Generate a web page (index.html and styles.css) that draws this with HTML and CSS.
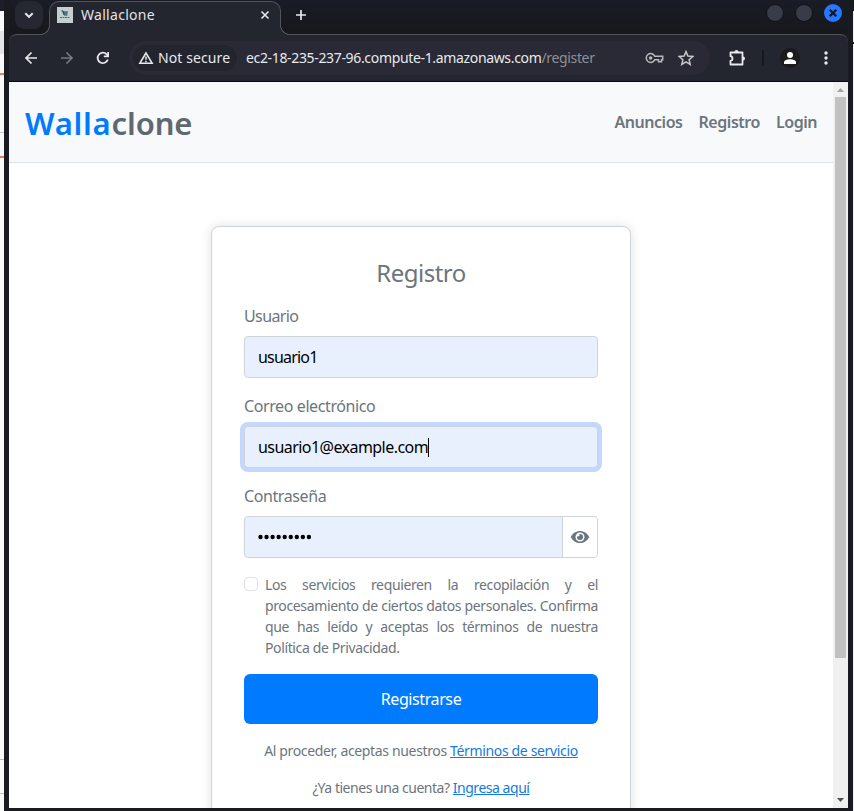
FILE: index.html
```html
<!DOCTYPE html>
<html lang="es">
<head>
<meta charset="utf-8">
<title>Wallaclone</title>
<link rel="stylesheet" href="styles.css">
</head>
<body>
<div class="desktop">
  <div class="behind behind-left"></div>
  <div class="window">
    <div class="tabstrip">
      <div class="tab-search"><svg width="12" height="12" viewBox="0 0 12 12"><path d="M2.300 4.200 6 7.900l3.700-3.700" fill="none" stroke="#e8e9ec" stroke-width="2"/></svg></div>
      <div class="tab">
        <svg class="favicon" width="16" height="16" viewBox="0 0 16 16"><path fill="#c5ced0" d="M0 0h16v16H0z"/><path d="M5 4.200h6L10.300 7.500H6.500z" fill="#49737d"/><path d="M4.500 3.800H6L7 8h3.500" fill="none" stroke="#253f4b" stroke-width=".9"/><path d="M3 10.500h10" stroke="#526a73" stroke-dasharray="2 .5"/></svg>
        <span class="tab-title">Wallaclone</span>
        <svg class="tab-close" width="10" height="10" viewBox="0 0 10 10"><path d="m1.500 1.500 7 7m0-7-7 7" stroke="#e8e9ec" stroke-width="1.600"/></svg>
      </div>
      <svg class="new-tab" width="12" height="12" viewBox="0 0 12 12"><path d="M6 1v10M1 6h10" stroke="#e8e9ec" stroke-width="1.700"/></svg>
      <div class="controls">
        <i class="dot"></i><i class="dot"></i>
        <svg width="18" height="18" viewBox="0 0 18 18"><circle cx="9" cy="9" r="9" fill="#2777ff"/><path d="m5.700 5.700 6.600 6.600m0-6.600-6.600 6.600" stroke="#10182a" stroke-width="2.300"/></svg>
      </div>
    </div>
    <div class="toolbar">
      <svg class="back" width="14" height="14" viewBox="0 0 14 14"><path d="M13 7H2m5.500-5.500L2 7l5.500 5.500" fill="none" stroke="#e8e9ec" stroke-width="1.700"/></svg>
      <svg class="forward" width="14" height="14" viewBox="0 0 14 14"><path d="M1 7h11M6.500 1.500 12 7l-5.500 5.500" fill="none" stroke="#777982" stroke-width="1.700"/></svg>
      <svg class="reload" width="14" height="14" viewBox="0 0 14 14"><path d="M11.800 8.500A5.200 5.200 0 1 1 10.700 3.400L12.300 5" fill="none" stroke="#e8e9ec" stroke-width="1.800"/><path d="M13 1v5.200H7.800V4.500h3.500V1z" fill="#e8e9ec"/></svg>
      <div class="omnibox">
        <div class="chip">
          <svg width="16" height="14" viewBox="0 0 16 14"><path d="M8 2 1.900 12.200h12.200z" fill="none" stroke="#e8e9ec" stroke-width="1.600"/><path d="M8 5.500v3.300M8 9.700v1.500" stroke="#e8e9ec" stroke-width="1.500"/></svg>
          <span class="chip-text">Not secure</span>
        </div>
        <span class="url">ec2-18-235-237-96.compute-1.amazonaws.com<span class="path">/register</span></span>
        <svg class="key" width="19" height="12" viewBox="0 0 19 12"><path d="M9.700 4.300h8v3.400h-1.200v2h-3v-2H9.700A4.400 4.400 0 1 1 9.700 4.300z" fill="none" stroke="#b8b9be" stroke-width="1.500"/><circle cx="5.600" cy="6" r="1.800" fill="#b8b9be"/></svg>
        <svg class="star" width="16" height="16" viewBox="0 0 16 16"><path d="m8 1.600 1.900 4.500 4.900.4-3.700 3.200 1.100 4.700L8 11.900l-4.200 2.500 1.100-4.700L1.200 6.500l4.900-.4z" fill="none" stroke="#c6c7cb" stroke-width="1.500"/></svg>
      </div>
      <svg class="puzzle" width="18" height="18" viewBox="0 0 18 18"><path d="M2.500 3.500h12v12h-12v-3.700c2.700-.3 2.700-4.300 0-4.600z" fill="none" stroke="#e8e9ec" stroke-width="1.800" stroke-linejoin="round"/><path d="M6.500 3a2 2 0 0 1 4 0zM15 7.500a2 2 0 0 1 0 4z" fill="#e8e9ec"/></svg>
      <i class="divider"></i>
      <div class="avatar"><svg width="12" height="12" viewBox="0 0 12 12"><circle cx="6" cy="3" r="3" fill="#fff"/><path d="M0 12v-1.700C0 8.300 3 7.300 6 7.300s6 1 6 3V12z" fill="#fff"/></svg></div>
      <svg class="dots" width="4" height="14" viewBox="0 0 4 14"><g fill="#e8e9ec"><circle cx="2" cy="2" r="1.700"/><circle cx="2" cy="7" r="1.700"/><circle cx="2" cy="12" r="1.700"/></g></svg>
    </div>
    <div class="viewport">
      <div class="page">
        <header class="site-header">
          <a class="brand"><span class="blue">Walla</span>clone</a>
          <nav><a>Anuncios</a><a>Registro</a><a>Login</a></nav>
        </header>
        <main class="card">
          <h1>Registro</h1>
          <label>Usuario</label>
          <div class="field">usuario1</div>
          <label>Correo electrónico</label>
          <div class="field focused"><span class="email">usuario1@example.com</span><i class="caret"></i></div>
          <label>Contraseña</label>
          <div class="field password">
            <svg class="bullets" width="54" height="6" viewBox="0 0 54 6"><path d="M2.500 3h50" stroke="#000" stroke-width="4.400" stroke-linecap="round" stroke-dasharray="0 6.050"/></svg>
            <span class="eye"><svg width="18" height="16" viewBox="0 0 576 512"><path fill="#6c757d" d="M572.520 241.400C518.290 135.590 410.930 64 288 64S57.680 135.640 3.480 241.410a32.350 32.350 0 0 0 0 29.190C57.710 376.410 165.070 448 288 448s230.320-71.640 284.520-177.410a32.350 32.350 0 0 0 0-29.190zM288 400a144 144 0 1 1 144-144 143.930 143.930 0 0 1-144 144zm0-240a95.310 95.310 0 0 0-25.310 3.790 47.850 47.850 0 0 1-66.900 66.900A95.780 95.780 0 1 0 288 160z"/></svg></span>
          </div>
          <div class="terms">
            <i class="checkbox"></i>
            <div class="terms-text"><p>Los servicios requieren la recopilación y el</p><p>procesamiento de ciertos datos personales. Confirma</p><p>que has leído y aceptas los términos de nuestra</p><p class="last">Política de Privacidad.</p></div>
          </div>
          <div class="button">Registrarse</div>
          <div class="note">Al proceder, aceptas nuestros <a>Términos de servicio</a></div>
          <div class="note login">¿Ya tienes una cuenta? <a>Ingresa aquí</a></div>
        </main>
      </div>
      <div class="scrollbar">
        <svg width="15" height="15" viewBox="0 0 15 15"><path d="m4 10 3.500-4 3.500 4z" fill="#a3a3a3"/></svg>
        <div class="thumb"></div>
        <svg class="down" width="15" height="15" viewBox="0 0 15 15"><path d="m4 5 3.500 4L11 5z" fill="#505050"/></svg>
      </div>
    </div>
  </div>
  <div class="behind behind-right"></div>
</div>
</body>
</html>
```
FILE: styles.css
```css
* { box-sizing: border-box; }
body { margin: 0; overflow: hidden; font: 16px/24px "Noto Sans", sans-serif; color: #6c757d; }
svg { display: block; flex: none; }
i { display: block; flex: none; }
h1, p { margin: 0; }
.desktop { display: flex; width: 854px; height: 811px; background: #fff; }
.behind-left { width: 4px; background:
  linear-gradient(#1b1f2a, #1b1f2a) 0 0 / 4px 11px no-repeat,
  linear-gradient(#ed7959, #ed7959) 0 73px / 4px 2px no-repeat,
  linear-gradient(#ed7959, #ed7959) 0 156px / 4px 2px no-repeat,
  linear-gradient(#c5c5c5, #c5c5c5) 0 132px / 4px 1px no-repeat,
  linear-gradient(#bbb, #bbb) 0 759px / 4px 1px no-repeat,
  linear-gradient(#bbb, #bbb) 0 793px / 4px 1px no-repeat,
  linear-gradient(#e3e6e7, #e3e6e7) 0 31px / 4px 23px no-repeat, #fafafa; }
.behind-right { width: 1px; background: linear-gradient(#14161d 0 11px, #eee 11px 42px, #14161d 42px 44px, #eee 44px); }
.window { display: flex; flex-direction: column; width: 849px; background: #191b21; padding: 0 5px 3px; }
.tabstrip { display: flex; height: 34px; background: linear-gradient(#191c26, #17181b); }
.tab-search { display: flex; align-items: center; justify-content: center; width: 28px; height: 28px; margin: 1px 0 0 6px; border-radius: 9px; background: #252731; }
.tab { position: relative; display: flex; align-items: center; width: 232px; height: 34px; margin: 1px 0 0 6px; padding: 0 10px 7px 7px; border: 1px solid #50525c; border-bottom: 0; border-radius: 10px 10px 0 0; background: #23252f; z-index: 1; }
.tab::before, .tab::after { content: ""; position: absolute; bottom: 0; width: 10px; height: 10px; background: radial-gradient(circle at 0 0, transparent 8.700px, #50525c 9.200px 9.800px, #23252f 10.200px); }
.tab::before { left: -10px; }
.tab::after { right: -10px; transform: scaleX(-1); }
.tab-title { margin-left: 8px; font-size: 14px; color: #e2e3e7; letter-spacing: .3px; white-space: nowrap; }
.tab-close { margin-left: auto; }
.new-tab { margin: 9px 0 0 14px; }
.controls { display: flex; gap: 11px; margin: 4px 6px 0 auto; }
.dot { width: 18px; height: 18px; border-radius: 50%; background: #383c48; border: 1px solid #101219; }
.toolbar { display: flex; align-items: center; height: 48px; border: solid #50525c; border-width: 1px 0 0; border-bottom: 1px solid #08090e; border-radius: 8px 8px 0 0; background: #23252f; padding-left: 15px; }
.forward { margin-left: 22px; }
.reload { margin-left: 22px; }
.omnibox { display: flex; align-items: center; width: 581px; height: 34px; margin-left: 19px; padding-left: 4px; border-radius: 17px; background: #292a35; }
.chip { display: flex; align-items: center; gap: 4px; width: 104px; height: 26px; padding-left: 5px; border-radius: 13px; background: #22242e; color: #e8e9ec; font-size: 14px; letter-spacing: .1px; white-space: nowrap; }
.url { width: 350px; margin-left: 9px; font-size: 14px; color: #e8e9ec; letter-spacing: -.34px; white-space: nowrap; }
.path { color: #8f9097; }
.key { margin-left: 49px; }
.star { margin-left: 14px; }
.puzzle { margin-left: 18px; }
.divider { width: 2px; height: 16px; margin-left: 16px; background: #151720; }
.avatar { display: flex; align-items: center; justify-content: center; width: 20px; height: 20px; margin-left: 16px; border-radius: 50%; background: #1b1b1b; }
.dots { margin-left: 24px; }
.viewport { display: flex; height: 726px; background: #fff; overflow: hidden; }
.page { width: 824px; }
.scrollbar { display: flex; flex-direction: column; width: 15px; height: 726px; background: #f0f0f0; }
.thumb { width: 11px; height: 561px; margin-left: 2px; background: #c1c1c1; }
.down { margin-top: auto; }
.site-header { display: flex; align-items: center; justify-content: space-between; height: 81px; padding: 0 16px; border-bottom: 1px solid #dee2e6; background: #f8f9fa; }
.brand { padding-top: 1px; font-size: 31px; line-height: 48px; font-weight: 600; color: #5f6870; letter-spacing: -.1px; }
.blue { color: #007bff; letter-spacing: .75px; }
nav { display: flex; gap: 16px; font-weight: 600; letter-spacing: -.46px; white-space: nowrap; }
.card { width: 420px; height: 700px; margin: 63px auto 0; padding: 32px; border: 1px solid #ced4da; border-radius: 8px; background: #fff; box-shadow: 0 0 12px rgba(0,0,0,.12); }
h1 { height: 29px; margin-bottom: 16px; font-size: 24px; line-height: 28px; font-weight: 400; letter-spacing: -.5px; text-align: center; }
label { display: block; height: 24px; margin-bottom: 8px; letter-spacing: -.4px; }
label:first-of-type { letter-spacing: -.6px; }
.field { display: flex; align-items: center; height: 42px; margin-bottom: 16px; padding-left: 13px; border: 1px solid #ced4da; border-radius: 4px; background: #e8f0fe; color: #000; letter-spacing: -.8px; }
.email { letter-spacing: -.55px; }
.focused { box-shadow: 0 0 0 4px #c2d8fc; }
.caret { width: 1px; height: 19px; background: #000; }
.eye { display: flex; align-items: center; justify-content: center; width: 35px; height: 40px; margin-left: auto; border-left: 1px solid #ced4da; border-radius: 0 3px 3px 0; background: #fff; }
.terms { display: flex; margin-bottom: 16px; }
.checkbox { width: 14px; height: 14px; margin: 3px 7px 0 0; border: 1px solid #dee2e6; border-radius: 4px; }
.terms-text { width: 333px; font-size: 14px; line-height: 21px; letter-spacing: -.37px; }
.terms-text p { white-space: nowrap; text-align-last: justify; }
.terms-text .last { text-align-last: left; }
.button { height: 50px; margin-bottom: 16px; border-radius: 6px; background: #007bff; color: #fff; line-height: 51px; text-align: center; letter-spacing: -.4px; }
.note { height: 21px; margin-bottom: 16px; font-size: 14px; line-height: 21px; text-align: center; letter-spacing: -.35px; white-space: nowrap; }
.login { letter-spacing: -.47px; }
.note a { color: #127be0; text-decoration: underline; }
```
